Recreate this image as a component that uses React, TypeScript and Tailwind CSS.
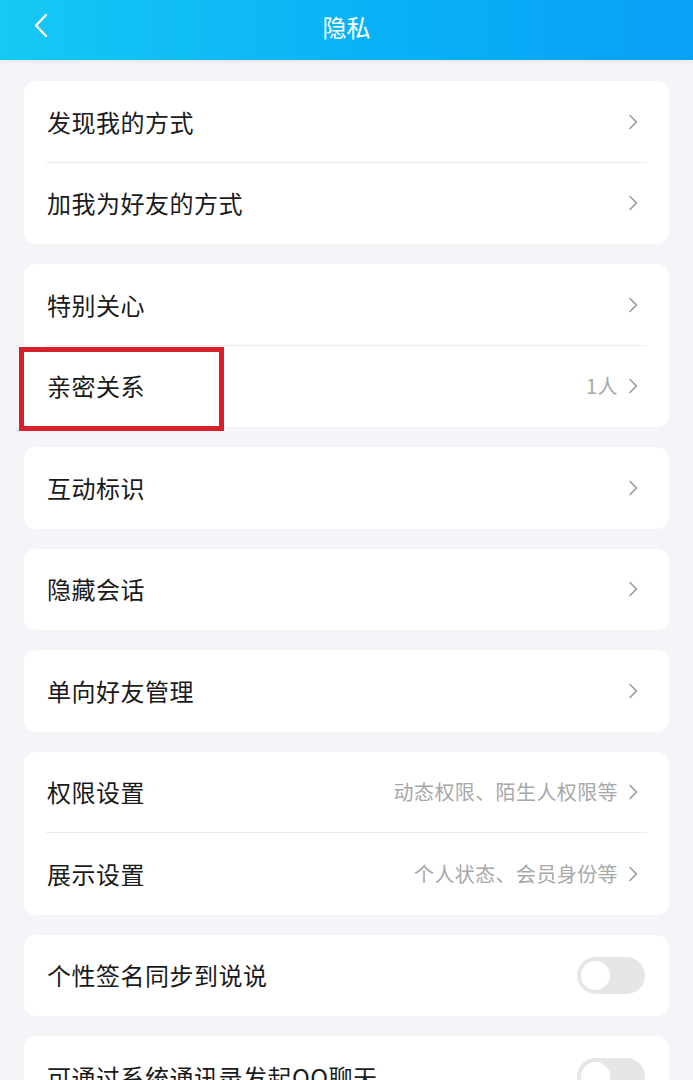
import React from "react";

type Row = {
  label: string;
  value?: string;
  toggle?: boolean;
  marked?: boolean;
};

const groups: Row[][] = [
  [{ label: "发现我的方式" }, { label: "加我为好友的方式" }],
  [{ label: "特别关心" }, { label: "亲密关系", value: "1人", marked: true }],
  [{ label: "互动标识" }],
  [{ label: "隐藏会话" }],
  [{ label: "单向好友管理" }],
  [
    { label: "权限设置", value: "动态权限、陌生人权限等" },
    { label: "展示设置", value: "个人状态、会员身份等" },
  ],
  [{ label: "个性签名同步到说说", toggle: true }],
  [{ label: "可通过系统通讯录发起QQ聊天", toggle: true }],
];

function Chevron() {
  return (
    <svg width="12" height="18" viewBox="0 0 12 18" className="shrink-0">
      <path d="M3 2.5 L9.5 9 L3 15.5" fill="none" stroke="#9a9a9a" strokeWidth="1.6" strokeLinecap="round" strokeLinejoin="round" />
    </svg>
  );
}

function Toggle() {
  return (
    <div className="w-[68px] h-[37px] rounded-full bg-[#e6e6e6] flex items-center px-[4px]">
      <div className="w-[29px] h-[29px] rounded-full bg-white" />
    </div>
  );
}

function SettingRow({ row, last }: { row: Row; last: boolean }) {
  return (
    <div className={"relative h-[81.5px] pl-[23px] flex items-center " + (row.toggle ? "pr-[24px]" : "pr-[30px]")}>
      <span className="text-[24px] text-[#1a1a1a] tracking-[0.5px]">{row.label}</span>
      <div className="ml-auto flex items-center gap-[9px]">
        {row.value && (
          <span className="text-[20px] text-[#a8a8a8] tracking-[0.4px]">{row.value}</span>
        )}
        {row.toggle ? <Toggle /> : <Chevron />}
      </div>
      {!last && (
        <div className="absolute left-[22px] right-[22px] bottom-0 h-px bg-[#ececec]" />
      )}
      {row.marked && (
        <div className="absolute left-[-5px] top-[1px] w-[205px] h-[84px] border-[5px] border-[#d8202a]" />
      )}
    </div>
  );
}

export default function App() {
  return (
    <div
      className="w-[693px] h-[1080px] overflow-hidden bg-[#f4f5f9]"
      style={{ fontFamily: '"Noto Sans CJK SC", "Noto Sans", sans-serif' }}
    >
      <div className="relative h-[60px] bg-gradient-to-r from-[#17c8f4] via-[#09b3f6] to-[#0aa0f6] flex items-center justify-center shadow-[0_2px_6px_rgba(0,0,0,0.06)]">
        <svg width="16" height="28" viewBox="0 0 16 28" className="absolute left-[33px] top-[12px]">
          <path d="M13 3 L3 13.5 L13 24" fill="none" stroke="#ffffff" strokeWidth="2.4" strokeLinecap="round" strokeLinejoin="round" />
        </svg>
        <span className="text-[24px] text-white -mt-[6px]">隐私</span>
      </div>
      <div className="px-[24px] pt-[21px] flex flex-col gap-[20px]">
        {groups.map((g, gi) => (
          <div key={gi} className="bg-white rounded-[12px]">
            {g.map((row, ri) => (
              <SettingRow key={ri} row={row} last={ri === g.length - 1} />
            ))}
          </div>
        ))}
      </div>
    </div>
  );
}
